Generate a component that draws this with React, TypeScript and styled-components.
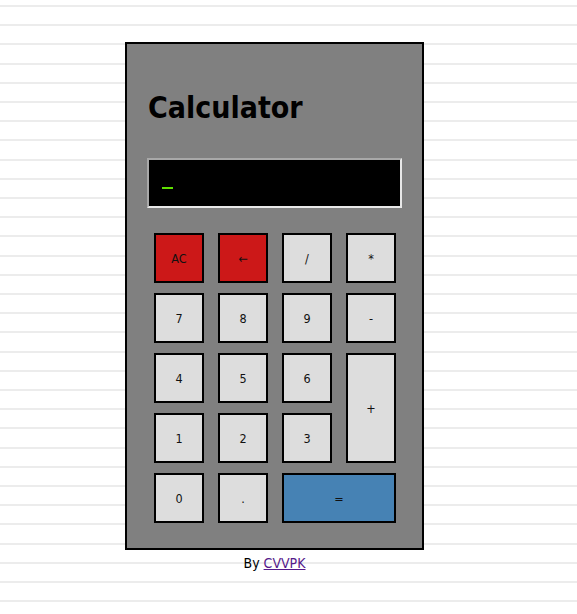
import React from "react";
import styled, { createGlobalStyle } from "styled-components";

const Global = createGlobalStyle`
  html, body { margin: 0; padding: 0; }
  body {
    min-height: 614px;
    background-color: #ffffff;
    background-image: repeating-linear-gradient(
      to bottom,
      #ffffff 0px,
      #ffffff 5px,
      #ececec 5px,
      #ececec 7px,
      #ffffff 7px,
      #ffffff 19.2px
    );
    font-family: "DejaVu Sans", sans-serif;
    font-stretch: condensed;
  }
`;

const Page = styled.div`
  padding: 42px 0 0 125px;
  width: 299px;
  display: flex;
  flex-direction: column;
  align-items: center;
`;

const Calc = styled.div`
  box-sizing: border-box;
  width: 299px;
  height: 508px;
  border: 2px solid #000;
  background: #808080;
  padding: 0 20px 24px;
  display: flex;
  flex-direction: column;
`;

const Title = styled.h1`
  margin: 47px 0 0 1px;
  font-family: "DejaVu Sans", sans-serif;
  font-stretch: condensed;
  font-weight: bold;
  font-size: 30px;
  line-height: 34px;
  color: #000;
`;

const Display = styled.div`
  box-sizing: border-box;
  margin-top: 33px;
  height: 50px;
  background: #000;
  border-style: solid;
  border-width: 2px;
  border-color: #a8a8a8 #e8e8e8 #e8e8e8 #a8a8a8;
  padding: 0 0 0 13px;
  display: flex;
  align-items: flex-end;
`;

const Cursor = styled.span`
  display: block;
  width: 11px;
  height: 2px;
  background: #5fe000;
  margin-bottom: 17px;
`;

const Keys = styled.div`
  margin-top: 25px;
  margin-left: 7px;
  display: grid;
  grid-template-columns: repeat(4, 50px);
  grid-auto-rows: 50px;
  column-gap: 14px;
  row-gap: 10px;
`;

const Key = styled.button<{ $bg?: string; $col?: string; $row?: string }>`
  box-sizing: border-box;
  margin: 0;
  padding: 0;
  border: 2px solid #000;
  background: ${(p) => p.$bg || "#dddddd"};
  grid-column: ${(p) => p.$col || "auto"};
  grid-row: ${(p) => p.$row || "auto"};
  font-family: "DejaVu Sans", sans-serif;
  font-stretch: condensed;
  font-size: 12.5px;
  color: #111;
  display: flex;
  align-items: center;
  justify-content: center;
  cursor: pointer;
`;

const Footer = styled.div`
  margin-top: 5px;
  font-family: "DejaVu Sans", sans-serif;
  font-stretch: condensed;
  font-size: 14px;
  color: #000;
  line-height: 16px;
`;

const Link = styled.a`
  color: #551a8b;
  text-decoration: underline;
`;

const RED = "#cc1818";
const BLUE = "#4682b4";

export default function App() {
  return (
    <>
      <Global />
      <Page>
        <Calc>
          <Title>Calculator</Title>
          <Display>
            <Cursor />
          </Display>
          <Keys>
            <Key $bg={RED}>AC</Key>
            <Key $bg={RED}>←</Key>
            <Key>/</Key>
            <Key>*</Key>
            <Key>7</Key>
            <Key>8</Key>
            <Key>9</Key>
            <Key>-</Key>
            <Key>4</Key>
            <Key>5</Key>
            <Key>6</Key>
            <Key $col="4" $row="3 / span 2">+</Key>
            <Key>1</Key>
            <Key>2</Key>
            <Key>3</Key>
            <Key>0</Key>
            <Key>.</Key>
            <Key $bg={BLUE} $col="3 / span 2">=</Key>
          </Keys>
        </Calc>
        <Footer>
          By <Link href="#">CVVPK</Link>
        </Footer>
      </Page>
    </>
  );
}
